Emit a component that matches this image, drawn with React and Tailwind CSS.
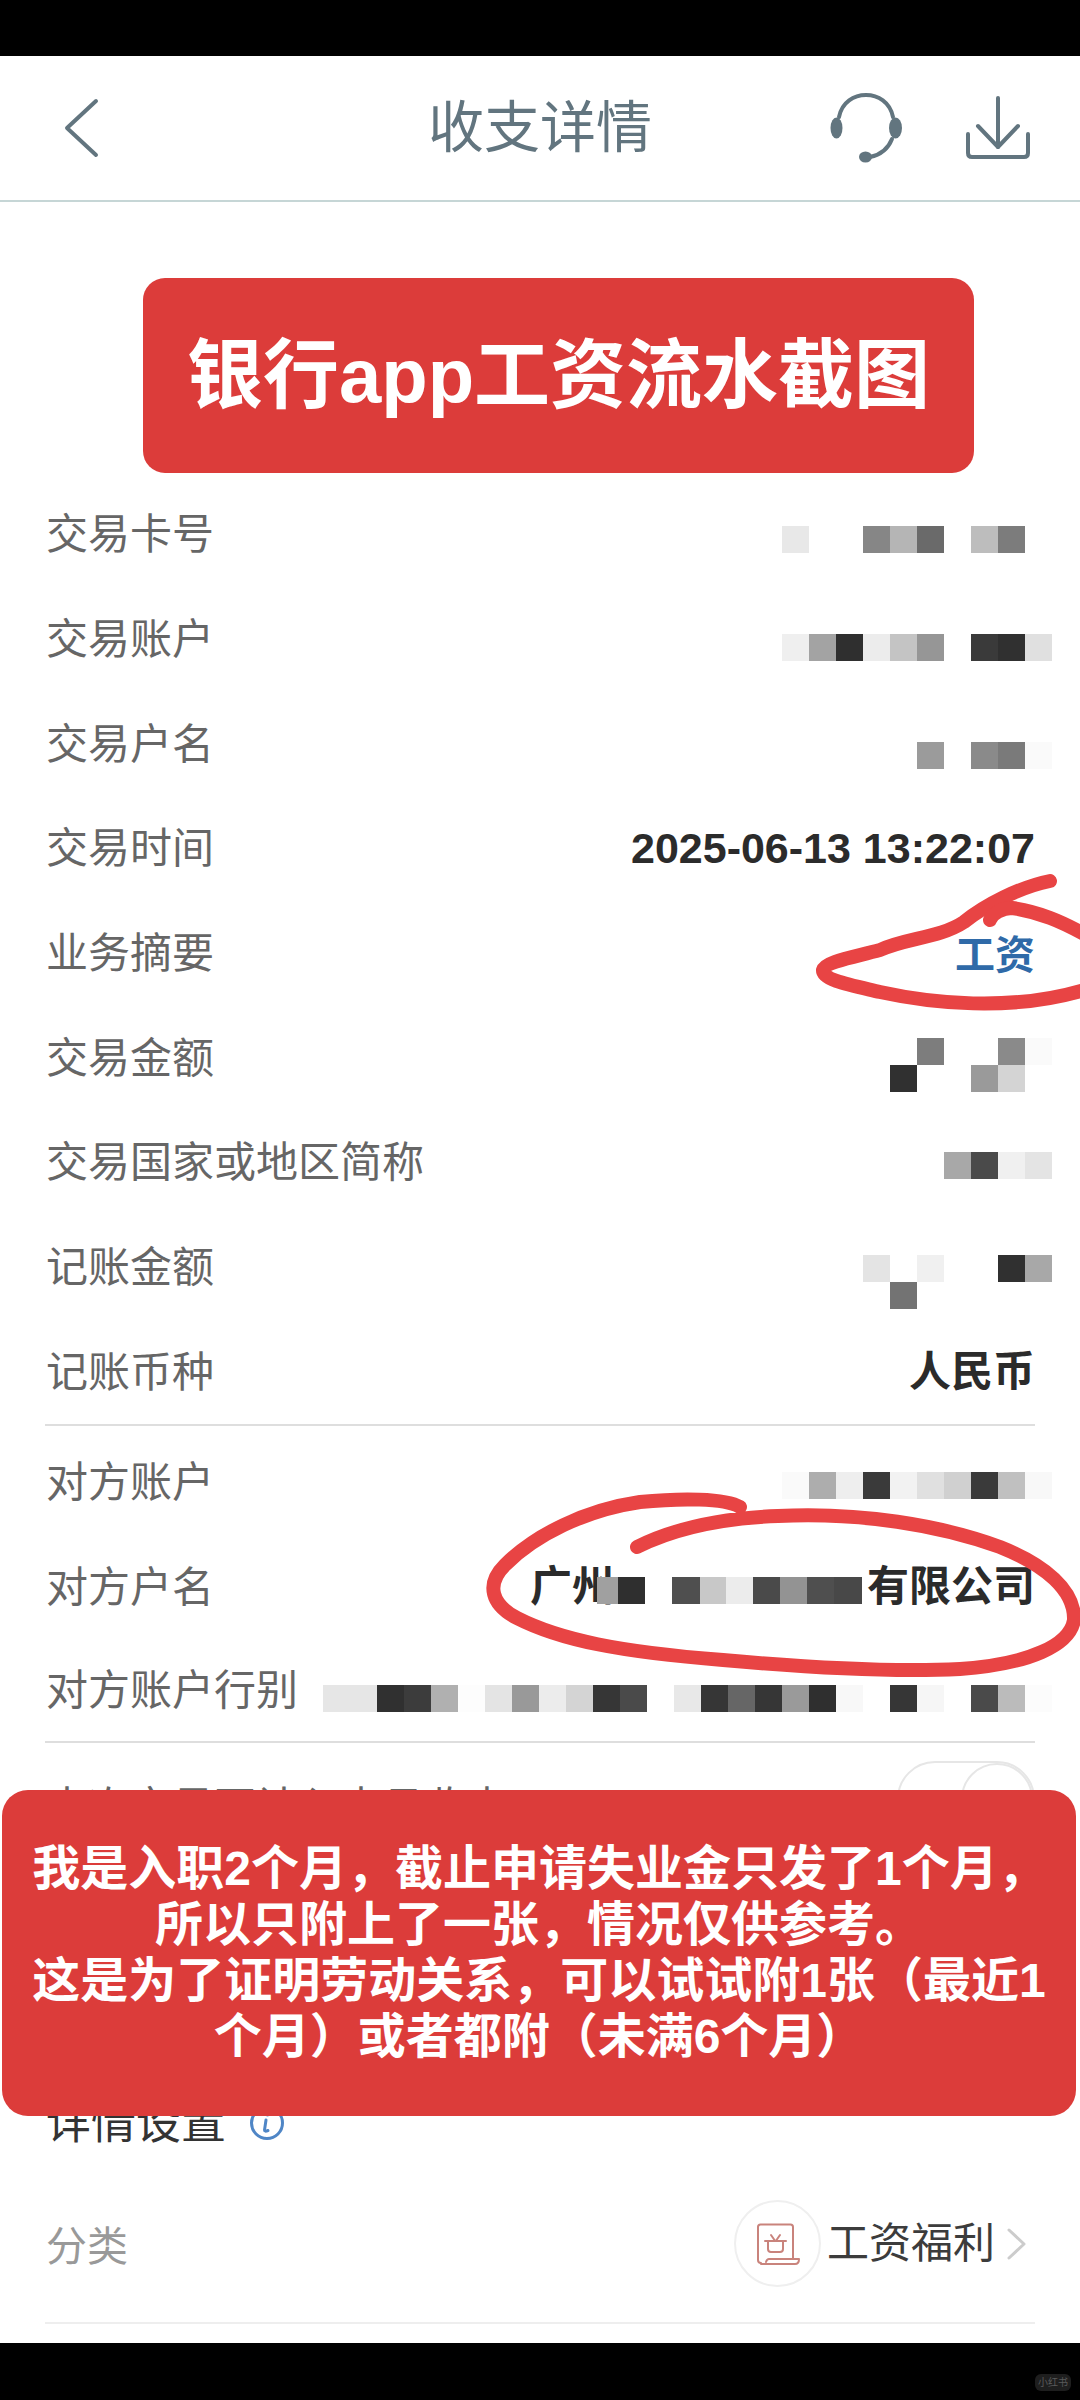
const labelText = "text-[42px] leading-none text-[#666666] whitespace-nowrap mt-[2px]";
const valueText = "text-[42px] leading-none font-bold text-[#2b2b2b] whitespace-nowrap";

// pixelated mosaic, each row left to right, "" = empty cell
const Mosaic = ({ rows, className = "" }) => (
  <div className={`flex flex-col -mr-[17px] ${className}`}>
    {rows.map((cells, r) => (
      <div key={r} className="flex">
        {cells.map((bg, i) => (
          <div key={i} className={`w-[27px] h-[27px] ${bg}`} />
        ))}
      </div>
    ))}
  </div>
);

const Row = ({ label, children, className = "h-[104.7px]" }) => (
  <div className={`flex items-center justify-between pl-[46px] pr-[45px] ${className}`}>
    <span className={labelText}>{label}</span>
    {children}
  </div>
);

const Divider = ({ className = "bg-[#dedede]" }) => <div className={`mx-[45px] h-[2px] ${className}`} />;

const HeadsetIcon = () => (
  <svg width="72" height="70" viewBox="0 0 72 70" fill="none" stroke="#62757f" strokeWidth="4" strokeLinecap="round">
    <path d="M9 24C12 9 24 2 36 2C48 2 60 9 63 24" />
    <path d="M62 46C58 56 50 62 40 64" />
    <ellipse cx="6.5" cy="35" rx="6" ry="10.5" fill="#62757f" stroke="none" />
    <ellipse cx="65.5" cy="35" rx="6.5" ry="10.5" fill="#62757f" stroke="none" />
    <ellipse cx="35.5" cy="64" rx="6.5" ry="5.5" fill="#62757f" stroke="none" />
  </svg>
);

const DownloadIcon = () => (
  <svg width="66" height="66" viewBox="0 0 66 66" fill="none" stroke="#62757f" strokeWidth="4" strokeLinecap="round" strokeLinejoin="round">
    <path d="M33 3V52" />
    <path d="M13 31L33 52L53 31" />
    <path d="M3 39V58Q3 62 7 62H59Q63 62 63 58V39" />
  </svg>
);

const InfoIcon = () => (
  <svg width="36" height="36" viewBox="0 0 36 36" fill="none" stroke="#4f86c6" strokeWidth="3" strokeLinecap="round">
    <circle cx="18" cy="18" r="15.5" />
    <path d="M17 15L15.5 25Q15.5 27 19 25.5" />
    <path d="M18.5 9.5V10" />
  </svg>
);

const PayrollIcon = () => (
  <svg width="50" height="50" viewBox="0 0 50 50" fill="none" stroke="#c9837c" strokeWidth="2" strokeLinecap="round" strokeLinejoin="round">
    <path d="M9 44Q6 44 6 41V8Q6 5.5 8.5 5.5H38.5Q41 5.5 41 8V40" />
    <path d="M9 45H43Q47 45 47 40H17Q15 40 14 43" />
    <path d="M13 22H34" />
    <path d="M16 22V30Q16 33 19 33H28Q31 33 31 30V22" />
    <path d="M19 16L22.5 21M28 16L24.5 21" />
  </svg>
);

export default function App() {
  return (
    <div
      lang="zh-CN"
      className="relative w-[1080px] h-[2400px] overflow-hidden bg-white flex flex-col font-['Liberation_Sans','Noto_Sans_CJK_SC',sans-serif]"
    >
      {/* status bar strip */}
      <div className="h-[56px] bg-black shrink-0" />

      {/* Header */}
      <div className="h-[144px] grid grid-cols-[1fr_auto_1fr] items-center shrink-0">
        <div className="pl-[62px]">
          <svg width="40" height="60" viewBox="0 0 40 60" fill="none" stroke="#62757f" strokeWidth="4" strokeLinecap="round" strokeLinejoin="round">
            <path d="M34 3L5 30L34 57" />
          </svg>
        </div>
        <div className="text-[56px] leading-none text-[#62757f]">收支详情</div>
        <div className="flex items-center justify-end gap-[63px] pr-[49px]">
          <HeadsetIcon />
          <DownloadIcon />
        </div>
      </div>
      <div className="h-[2px] bg-[#c6d6d6] shrink-0" />

      {/* Top banner */}
      <div className="mt-[76px] ml-[143px] w-[831px] h-[195px] shrink-0 rounded-[22px] bg-[#dc3c3a] flex items-center justify-center">
        <span className="text-[76px] leading-none font-bold text-white whitespace-nowrap">银行app工资流水截图</span>
      </div>

      {/* Transaction rows */}
      <div className="mt-[9px] shrink-0">
        <Row label="交易卡号">
          <Mosaic className="mt-[10px]" rows={[["bg-[#e8e8e8]", "", "", "bg-[#868686]", "bg-[#b5b5b5]", "bg-[#6a6a6a]", "", "bg-[#bdbdbd]", "bg-[#7c7c7c]", ""]]} />
        </Row>
        <Row label="交易账户">
          <Mosaic className="mt-[16px]" rows={[["bg-[#efefef]", "bg-[#a3a3a3]", "bg-[#2f2f2f]", "bg-[#ececec]", "bg-[#c4c4c4]", "bg-[#969696]", "", "bg-[#3a3a3a]", "bg-[#303030]", "bg-[#e0e0e0]"]]} />
        </Row>
        <Row label="交易户名">
          <Mosaic className="mt-[24px]" rows={[["bg-[#9b9b9b]", "", "bg-[#8a8a8a]", "bg-[#7a7a7a]", "bg-[#fafafa]"]]} />
        </Row>
        <Row label="交易时间">
          <span className="text-[43px] leading-none font-bold text-[#2b2b2b] whitespace-nowrap">2025-06-13 13:22:07</span>
        </Row>
        <Row label="业务摘要">
          <span className="text-[40px] leading-none font-bold text-[#2f6aa8] mt-[3px]">工资</span>
        </Row>
        <Row label="交易金额">
          <Mosaic
            className="mt-[14px]"
            rows={[
              ["", "bg-[#7d7d7d]", "", "", "bg-[#8a8a8a]", "bg-[#fafafa]"],
              ["bg-[#303030]", "", "", "bg-[#9a9a9a]", "bg-[#d4d4d4]", ""],
            ]}
          />
        </Row>
        <Row label="交易国家或地区简称">
          <Mosaic className="mt-[6px]" rows={[["bg-[#a8a8a8]", "bg-[#4a4a4a]", "bg-[#f0f0f0]", "bg-[#e4e4e4]"]]} />
        </Row>
        <Row label="记账金额">
          <Mosaic
            className="mt-[30px]"
            rows={[
              ["bg-[#e4e4e4]", "", "bg-[#f0f0f0]", "", "", "bg-[#303030]", "bg-[#a8a8a8]"],
              ["", "bg-[#737373]", "", "", "", "", ""],
            ]}
          />
        </Row>
        <Row label="记账币种">
          <span className={valueText}>人民币</span>
        </Row>
      </div>
      <Divider />

      {/* Counterparty rows */}
      <div className="pt-[3px] shrink-0">
        <Row label="对方账户" className="h-[105px]">
          <Mosaic
            className="mt-[8px]"
            rows={[["bg-[#fafafa]", "bg-[#adadad]", "bg-[#eeeeee]", "bg-[#3a3a3a]", "bg-[#f2f2f2]", "bg-[#e0e0e0]", "bg-[#d0d0d0]", "bg-[#3a3a3a]", "bg-[#c0c0c0]", "bg-[#f8f8f8]"]]}
          />
        </Row>
        <Row label="对方户名" className="h-[105px]">
          <div className="flex items-center">
            <span className={valueText}>广州</span>
            <div className="flex -ml-[17px] mr-[5px] mt-[8px]">
              <div className="w-[21px] h-[27px] bg-[#a0a0a0]" />
              <div className="w-[27px] h-[27px] bg-[#2f2f2f]" />
              <div className="w-[27px] h-[27px]" />
              <div className="w-[28px] h-[27px] bg-[#4f4f4f]" />
              <div className="w-[26px] h-[27px] bg-[#c8c8c8]" />
              <div className="w-[27px] h-[27px] bg-[#ececec]" />
              <div className="w-[27px] h-[27px] bg-[#4a4a4a]" />
              <div className="w-[27px] h-[27px] bg-[#939393]" />
              <div className="w-[27px] h-[27px] bg-[#4f4f4f]" />
              <div className="w-[28px] h-[27px] bg-[#484848]" />
            </div>
            <span className={valueText}>有限公司</span>
          </div>
        </Row>
        <Row label="对方账户行别" className="h-[102px]">
          <Mosaic
            className="mt-[16px]"
            rows={[["bg-[#e6e6e6]", "bg-[#e6e6e6]", "bg-[#303030]", "bg-[#3c3c3c]", "bg-[#b0b0b0]", "bg-[#fdfdfd]", "bg-[#e4e4e4]", "bg-[#999999]", "bg-[#ececec]", "bg-[#d4d4d4]", "bg-[#363636]", "bg-[#4a4a4a]", "", "bg-[#e8e8e8]", "bg-[#363636]", "bg-[#666666]", "bg-[#363636]", "bg-[#9a9a9a]", "bg-[#2f2f2f]", "bg-[#f8f8f8]", "", "bg-[#363636]", "bg-[#f6f6f6]", "", "bg-[#4a4a4a]", "bg-[#bbbbbb]", "bg-[#fcfcfc]"]]}
          />
        </Row>
      </div>
      <Divider />

      {/* Row mostly hidden by the note */}
      <Row label="本次交易不计入本月收支" className="h-[127px] shrink-0">
        <div className="mb-[16px] w-[138px] h-[76px] rounded-full border-2 border-[#e6e6e6] flex justify-end">
          <div className="w-[72px] h-full rounded-full border-2 border-[#e6e6e6]" />
        </div>
      </Row>
      <div className="h-[202px] shrink-0" />

      {/* Detail settings */}
      <div className="h-[102px] shrink-0 flex items-center gap-[23px] pl-[46px]">
        <span className="text-[45px] leading-none text-[#333333]">详情设置</span>
        <InfoIcon />
      </div>
      <div className="h-[139px] shrink-0 flex items-center justify-between pl-[46px] pr-[54px]">
        <span className="text-[41px] leading-none text-[#999999] mt-[8px]">分类</span>
        <div className="flex items-center">
          <div className="w-[87px] h-[87px] rounded-full border-2 border-[#efefef] flex items-center justify-center mr-[6px]">
            <PayrollIcon />
          </div>
          <span className="text-[42px] leading-none text-[#3c3c3c]">工资福利</span>
          <svg className="ml-[12px]" width="19" height="32" viewBox="0 0 19 32" fill="none" stroke="#cccccc" strokeWidth="3" strokeLinecap="round" strokeLinejoin="round">
            <path d="M2 2L17 16L2 30" />
          </svg>
        </div>
      </div>
      <div className="mt-[9px] shrink-0">
        <Divider className="bg-[#eeeeee]" />
      </div>

      {/* Bottom black bar */}
      <div className="mt-auto h-[57px] bg-black flex items-end justify-end pr-[9px] pb-[9px]">
        <div className="w-[36px] h-[17px] rounded-[6px] bg-[#1e1e1e] flex items-center justify-center">
          <span className="text-[10px] leading-none text-[#5a5a5a] whitespace-nowrap">小红书</span>
        </div>
      </div>

      {/* Hand-drawn marker circles */}
      <svg className="absolute left-0 top-0 pointer-events-none" width="1080" height="2400" viewBox="0 0 1080 2400" fill="none" stroke="#e84444" strokeWidth="14" strokeLinecap="round" strokeLinejoin="round">
        <path d="M1050 881C1020 887 985 905 964 922C940 938 905 938 880 950C850 958 825 962 823 970C822 980 850 985 880 992C930 1003 1010 1012 1084 990" />
        <path d="M990 920C992 914 1002 908 1012 908C1040 912 1062 922 1084 934" />
        <path d="M740 1507C725 1498 680 1498 640 1502C585 1510 535 1535 505 1565C485 1585 492 1605 517 1618C560 1640 620 1652 723 1660C790 1666 880 1673 960 1669C1030 1664 1070 1645 1074 1620C1075 1590 1045 1565 1000 1547C940 1525 860 1512 778 1516C725 1518 675 1528 637 1547" />
      </svg>

      {/* Note overlay */}
      <div className="absolute left-[2px] right-[4px] top-[1790px] h-[326px] rounded-[26px] bg-[#dc3c3a] flex items-center justify-center">
        <p className="text-[48px] leading-[56px] font-bold text-white text-center whitespace-nowrap">
          我是入职2个月，截止申请失业金只发了1个月，
          <br />
          所以只附上了一张，情况仅供参考。
          <br />
          这是为了证明劳动关系，可以试试附1张（最近1
          <br />
          个月）或者都附（未满6个月）
        </p>
      </div>
    </div>
  );
}
